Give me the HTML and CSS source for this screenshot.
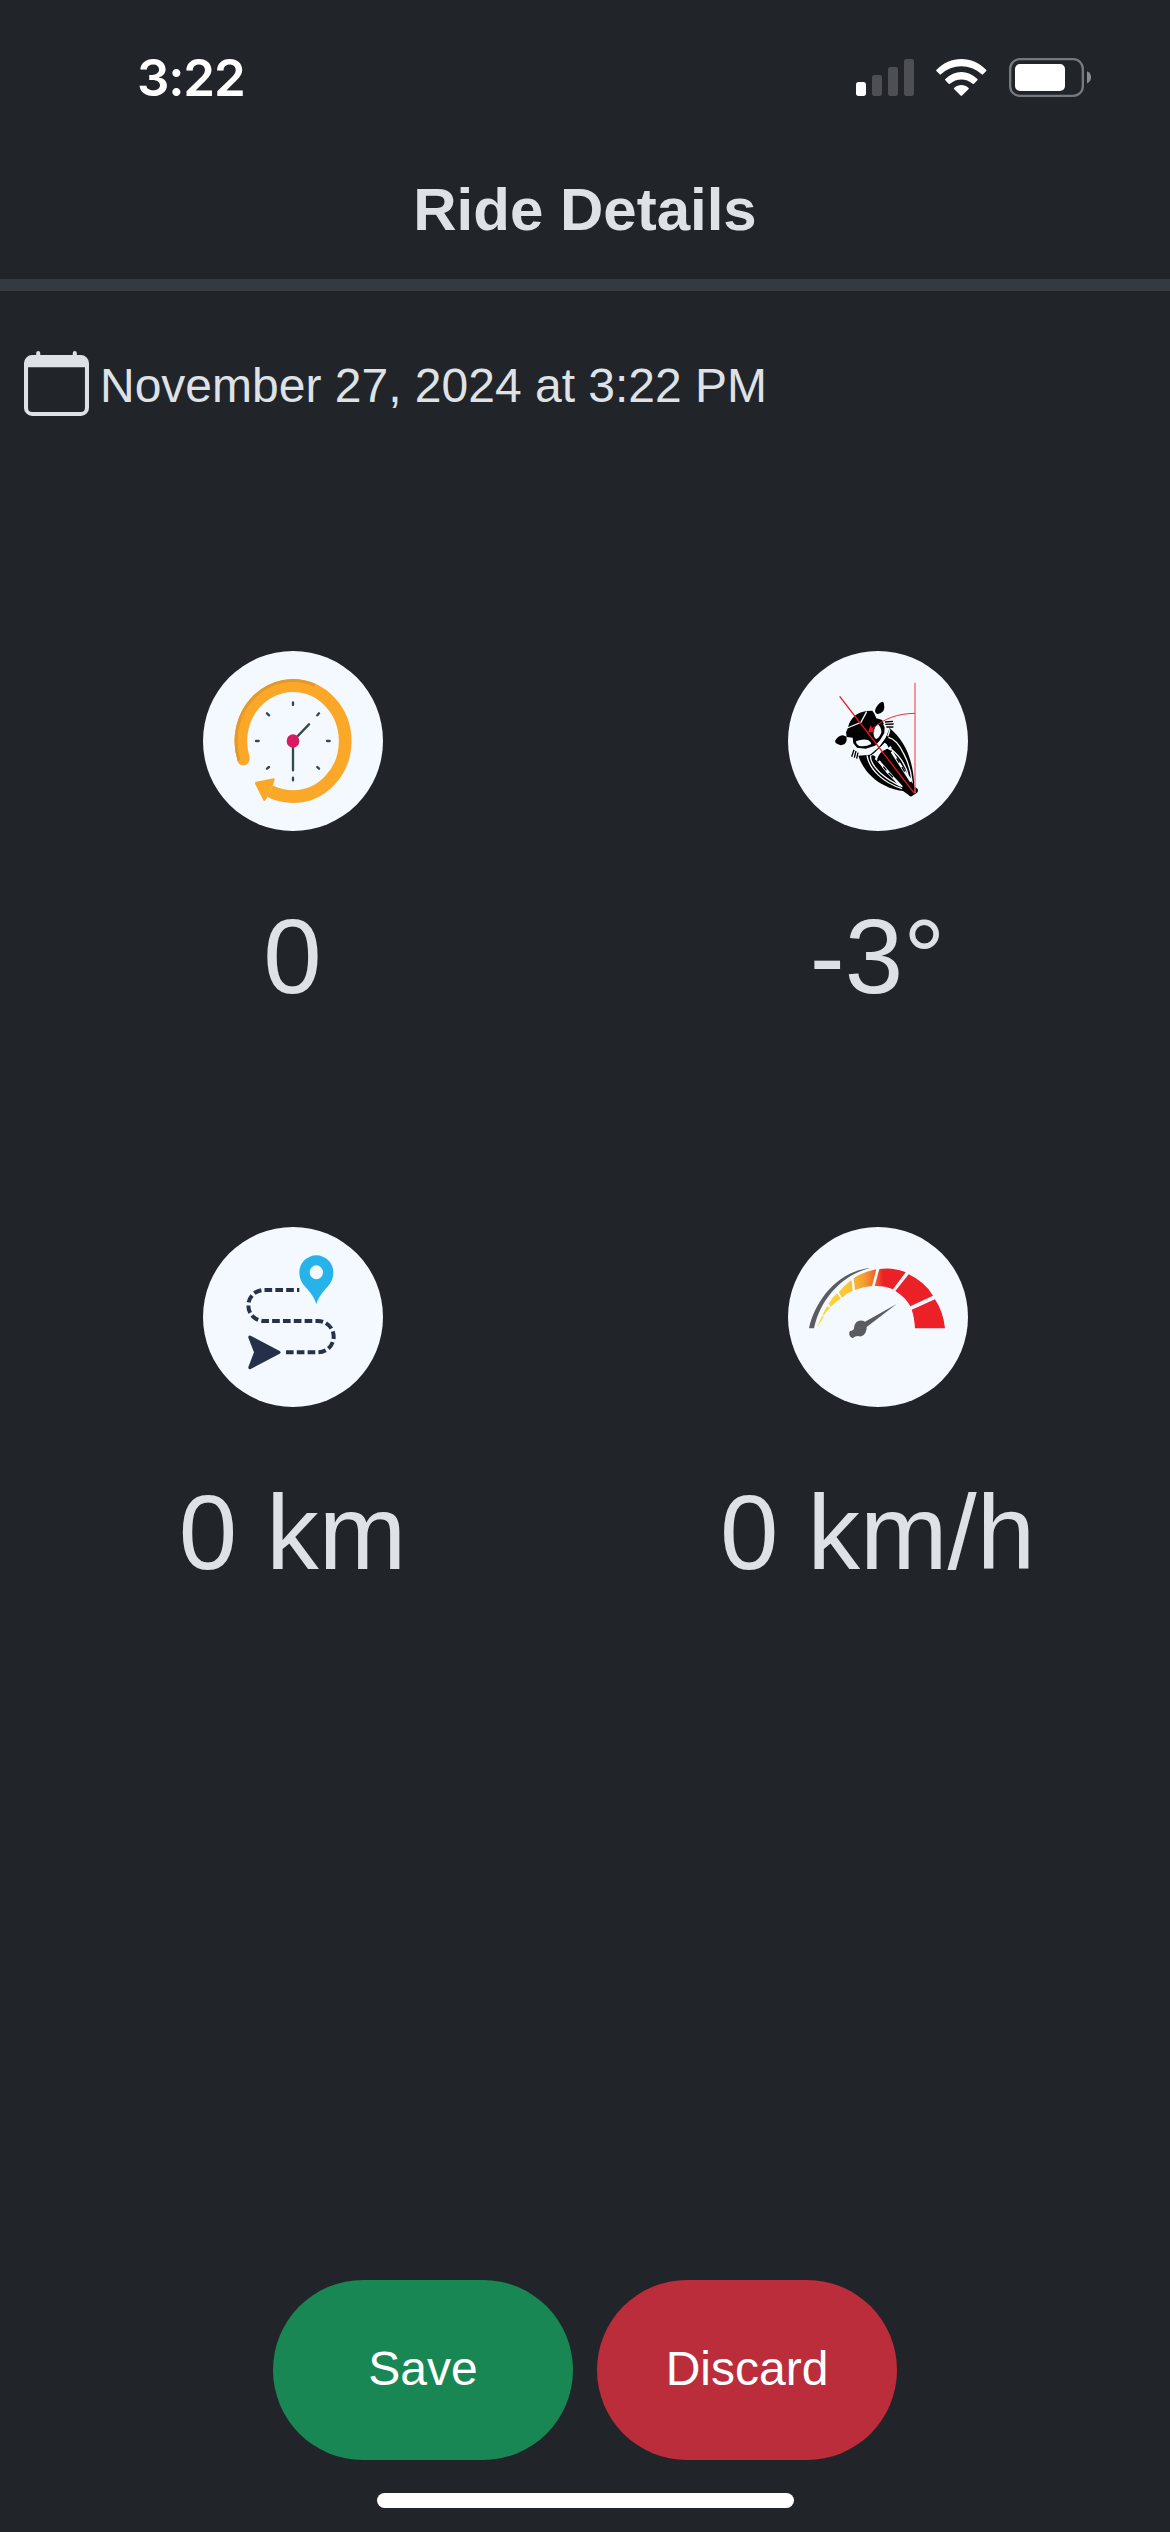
FILE: index.html
```html
<!DOCTYPE html>
<html lang="en">
<head>
<meta charset="utf-8">
<title>Ride Details</title>
<link rel="stylesheet" href="styles.css">
</head>
<body>
<div class="screen">
  <div class="status-bar">
    <span class="time">3:22</span>
    <div class="status-icons">
      <svg width="58" height="40" viewBox="108 54 174 120" fill="#4d4f53">
        <rect x="108" y="126" width="30" height="42" rx="8" fill="#fff"/>
        <rect x="156" y="105" width="30" height="63" rx="8"/>
        <rect x="204" y="81" width="30" height="87" rx="8"/>
        <rect x="252" y="57" width="30" height="111" rx="8"/>
      </svg>
      <svg width="51" height="40" viewBox="348 54 153 120" fill="#fff">
        <path d="M349 90C390 46 458 46 499 90Q500 92 498 94L489 103Q487 105 485 103C451 71 397 71 363 103Q361 105 359 103L350 94Q348 92 349 90Z"/>
        <path d="M376 117C404 89 444 89 472 117Q474 119 472 121L462 131Q460 133 458 131C438 114 410 114 390 131Q388 133 386 131L376 121Q374 119 376 117Z"/>
        <path d="M403 143C415 132 433 132 445 143Q448 145 446 147L427 166Q424 169 421 166L402 147Q400 145 403 143Z"/>
      </svg>
      <svg width="83" height="40" viewBox="567 54 249 120">
        <rect x="570.500" y="57.500" width="218" height="110" rx="29" fill="none" stroke="#77797c" stroke-width="7"/>
        <rect x="585" y="72" width="150" height="81" rx="15" fill="#fff"/>
        <path d="M801 94Q813 99 813 112T801 130Z" fill="#8b8c8f"/>
      </svg>
    </div>
  </div>

  <header class="header"><h1 class="title">Ride Details</h1></header>

  <div class="date-row">
    <svg class="calendar" viewBox="0 0 16 16" fill="currentColor"><path d="M3.500 0a.5.5 0 0 1 .5.5V1h8V.5a.5.5 0 0 1 1 0V1h1a2 2 0 0 1 2 2v11a2 2 0 0 1-2 2H2a2 2 0 0 1-2-2V3a2 2 0 0 1 2-2h1V.5a.5.5 0 0 1 .5-.5M1 4v10a1 1 0 0 0 1 1h12a1 1 0 0 0 1-1V4z"/></svg>
    <span>November 27, 2024 at 3:22 PM</span>
  </div>

  <main class="stats">
    <section class="stat">
      <svg class="stat-icon" viewBox="39 32 540 540">
        <path d="M160.500 355A156.500 166.500 0 0 1 309 136A156.500 166.500 0 0 1 309 469Q274 469 240 453" fill="none" stroke="#fba829" stroke-width="38"/>
        <circle cx="160" cy="356" r="19" fill="#fba829"/>
        <path d="M147 360A170.500 181.500 0 0 1 375 135" fill="none" stroke="#e19a2b" stroke-width="9"/>
        <path d="M198 424L251 414Q255 414 254 418L248 437L232 471L225 481Q222 484 220 480L195 430Q194 425 198 424Z" fill="#fba829"/>
        <g stroke="#37474f" stroke-width="7" stroke-linecap="round">
          <path d="M309 302L357 252M309 302V390"/>
          <path d="M309 186V194M309 412V420M198 302H206M411 302H419M231 219L237 225M387 219L382 225M231 385L237 380M387 385L382 380"/>
        </g>
        <ellipse cx="309" cy="302" rx="19" ry="20" fill="#d81b60"/>
      </svg>
      <div class="value">0</div>
    </section>
    <section class="stat">
      <svg class="stat-icon" viewBox="39 32 540 540">
        <path d="M301 207Q308 189 322 184Q327 184 327 192Q330 204 325 212Q316 222 307 221Q298 218 301 207Z"/>
        <path d="M180 302Q189 286 203 285Q215 287 215 293Q216 305 208 312Q197 317 189 312Q180 309 180 302Z"/>
        <path d="M219 262C224 235 246 215 275 212L292 211L299 222L304 234L322 239L329 258L328 278L315 300L300 316L272 325L246 322L235 309L233 292L215 290L213 276Z"/>
        <path d="M250 346L285 343L310 322L332 292L344 263C387 300 414 350 418 438L428 446Q431 456 424 459L410 468Q404 469 400 463L384 452C320 444 268 402 250 346Z"/>
        <path d="M275 214L258 246L217 263" fill="none" stroke="#f4f9ff" stroke-width="4"/>
        <path d="M308 251Q319 260 319 276Q314 293 303 296Q294 291 296 272Q299 259 308 251Z" fill="#f4f9ff"/>
        <path d="M243 303Q263 294 279 299Q289 305 289 311Q272 320 253 317Q243 312 243 303Z" fill="#f4f9ff"/>
        <path d="M236 323L260 337Q281 337 304 323Q328 302 337 270L326 251" fill="none" stroke="#f4f9ff" stroke-width="4"/>
        <path d="M330 245L354 243M331 252L356 251M334 260L355 260M237 328L230 349M243 332L238 352M249 337L245 355" stroke="#000" stroke-width="4"/>
        <g fill="none" stroke="#f4f9ff">
          <path d="M276 345C283 388 325 427 381 445M344 267C343 278 341 281 338 288" stroke-width="4"/>
          <path d="M287 345Q283 366 316 398Q345 424 382 439L363 419Q333 400 312 361M340 291Q365 296 386 340Q407 380 411 423L400 407Q391 362 349 327" stroke-width="4"/>
          <path d="M301 335L329 307L350 320L349 333Q332 322 309 352L306 362L287 346Z" fill="#f4f9ff" stroke="none"/>
          <path d="M310 361L376 436M349 332L408 424" stroke-width="7"/>
          <path d="M325 379L334 390M341 398L354 411M365 354L373 367M381 380L389 394" stroke="#000" stroke-width="4"/>
        </g>
        <path d="M288 347Q295 341 302 350L298 359ZM333 307L343 303L348 314L341 322ZM307 356Q313 333 337 325L351 333L342 342Q320 347 311 364Z"/>
        <path d="M194 168L418 459" stroke="#e9161d" stroke-width="4"/>
        <path d="M420 127V459" stroke="#f26468" stroke-width="4"/>
        <path d="M420 219C370 220 330 232 290 267" fill="none" stroke="#ee2d32" stroke-width="3"/>
        <path d="M279 277L286 255L299 273Z" fill="#f21219"/>
      </svg>
      <div class="value">-3°</div>
    </section>
    <section class="stat">
      <svg class="stat-icon" viewBox="39 35 540 540">
        <path d="M328 224H221.500A46.500 46.500 0 0 0 221.500 317H384A47 47 0 0 1 384 411H288" fill="none" stroke="#27324a" stroke-width="12" stroke-dasharray="23 9.500" stroke-dashoffset="16"/>
        <path d="M182 361L269 407Q275 411 269 415L182 461Q174 464 175 455L192 411L175 367Q174 358 182 361Z" fill="#27304a"/>
        <path fill-rule="evenodd" d="M379 266C371 241 355 225 341 209Q328 193 328 171A51 51 0 0 1 430 171Q430 193 417 209C403 225 387 241 379 266ZM379 150A20 21 0 1 0 379 192A20 21 0 1 0 379 150Z" fill="#25b3ea"/>
      </svg>
      <div class="value">0 km</div>
    </section>
    <section class="stat">
      <svg class="stat-icon" viewBox="39 35 540 540">
        <defs>
          <linearGradient id="amber" gradientUnits="userSpaceOnUse" x1="126" y1="0" x2="325" y2="0">
            <stop offset="0" stop-color="#ffdc35"/><stop offset=".5" stop-color="#f9c334"/><stop offset=".72" stop-color="#f49a30"/><stop offset=".88" stop-color="#ef6429"/><stop offset="1" stop-color="#ec2027"/>
          </linearGradient>
        </defs>
        <path d="M102 339C119 258 187 167 286 158C205 177 137 247 117 339Z" fill="#5b5c60"/>
        <g fill="#ec2027">
          <path d="M420 339Q418 305 410 283L480 252Q505 290 510 339Z"/>
          <path d="M406 273Q392 246 361 227L401 177Q450 200 474 241Z"/>
        </g>
        <g fill="url(#amber)">
          <path d="M354 222Q330 211 299 212L313 161Q355 155 392 171Z"/>
          <path d="M291 212Q265 213 240 224L236 189Q262 170 304 162Z"/>
          <path d="M233 226Q215 233 202 247L191 231Q208 210 229 194Z"/>
          <path d="M197 250Q180 259 167 275L161 265Q172 247 186 234Z"/>
          <path d="M165 279Q152 290 146 301L143 299Q150 282 157 272Z"/>
          <path d="M127 335Q133 315 142 302L146 305Z"/>
        </g>
        <path d="M365 266L270 319Q260 313 250 317Q238 322 237 339Q235 347 225 347Q221 352 223 359Q227 369 234 368Q240 362 249 362Q264 367 272 351Q276 342 275 335Z" fill="#5b5c60"/>
      </svg>
      <div class="value">0 km/h</div>
    </section>
  </main>

  <footer class="actions">
    <button class="btn save">Save</button>
    <button class="btn discard">Discard</button>
  </footer>
  <div class="home-bar"></div>
</div>
</body>
</html>
```
FILE: styles.css
```css
* { box-sizing: border-box; }
body {
  margin: 0;
  background: #212529;
  color: #dee2e6;
  font-family: "Liberation Sans", Arial, sans-serif;
}
.screen {
  width: 1170px;
  height: 2532px;
  display: flex;
  flex-direction: column;
  overflow: hidden;
}
.status-bar {
  height: 156px;
  padding: 0 78px 0 137px;
  display: flex;
  justify-content: space-between;
  align-items: center;
}
.time {
  font-family: Inter, sans-serif;
  font-size: 51px;
  font-weight: 600;
  line-height: 60px;
  letter-spacing: -1.2px;
  color: #fff;
}
.status-icons { display: flex; gap: 22px; }
.header {
  height: 135px;
  padding-top: 18px;
  border-bottom: 12px solid #343a40;
}
.title {
  margin: 0;
  font-size: 60px;
  line-height: 72px;
  text-align: center;
}
.date-row {
  height: 65px;
  margin-top: 60px;
  padding-left: 24px;
  display: flex;
  align-items: center;
  gap: 11px;
  font-size: 48px;
  line-height: 60px;
}
.date-row span { padding-top: 5px; }
.calendar { width: 65px; height: 65px; }
.stats {
  margin-top: 235px;
  display: grid;
  grid-template-columns: 1fr 1fr;
  grid-auto-rows: 576px;
}
.stat {
  display: flex;
  flex-direction: column;
  align-items: center;
}
.stat-icon {
  width: 180px;
  height: 180px;
  border-radius: 50%;
  background: #f4f9ff;
}
.value {
  margin-top: 63px;
  font-size: 105px;
  line-height: 126px;
}
.actions {
  margin-top: auto;
  display: flex;
  justify-content: center;
  gap: 24px;
}
.btn {
  width: 300px;
  height: 180px;
  padding: 0 0 3px;
  border: 0;
  border-radius: 90px;
  color: #fff;
  font-family: inherit;
  font-size: 48px;
}
.save { background: #198754; }
.discard { background: #bb2d3b; }
.home-bar {
  width: 417px;
  height: 15px;
  margin: 33px auto 24px;
  border-radius: 8px;
  background: #fff;
}
```
